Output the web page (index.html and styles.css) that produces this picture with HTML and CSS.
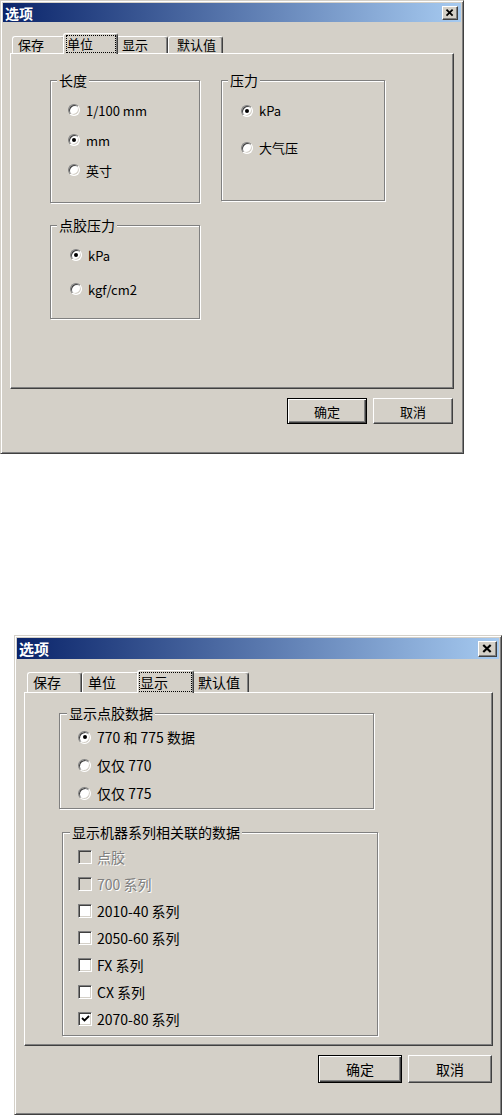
FILE: index.html
```html
<!DOCTYPE html>
<html lang="zh-CN">
<head>
<meta charset="UTF-8">
<title>选项</title>
<link rel="stylesheet" href="styles.css">
</head>
<body>

<!-- Units tab -->
<div class="dialog dialog-units">
  <div class="titlebar">
    <span class="title">选项</span>
    <span class="close-btn">
      <svg viewBox="0 0 16 14" preserveAspectRatio="none"><path d="M4 3L11 10M11 3L4 10" stroke="#000" stroke-width="2" fill="none"/></svg>
    </span>
  </div>
  <div class="dialog-body">
    <div class="tabs">
      <span class="tab tab-save">保存</span>
      <span class="tab tab-unit selected"><span class="focus">单位</span></span>
      <span class="tab tab-show">显示</span>
      <span class="tab tab-default">默认值</span>
    </div>
    <div class="panel">
      <div class="group-column">
        <fieldset class="group group-length">
          <legend>长度</legend>
          <label class="option"><span class="radio"></span>1/100 mm</label>
          <label class="option"><span class="radio checked"></span>mm</label>
          <label class="option"><span class="radio"></span>英寸</label>
        </fieldset>
        <fieldset class="group group-glue">
          <legend>点胶压力</legend>
          <label class="option"><span class="radio checked"></span>kPa</label>
          <label class="option"><span class="radio"></span>kgf/cm2</label>
        </fieldset>
      </div>
      <fieldset class="group group-pressure">
        <legend>压力</legend>
        <label class="option"><span class="radio checked"></span>kPa</label>
        <label class="option"><span class="radio"></span>大气压</label>
      </fieldset>
    </div>
    <div class="buttons">
      <button class="btn default">确定</button>
      <button class="btn">取消</button>
    </div>
  </div>
</div>

<!-- Display tab -->
<div class="dialog dialog-display">
  <div class="titlebar">
    <span class="title">选项</span>
    <span class="close-btn">
      <svg viewBox="0 0 16 14" preserveAspectRatio="none"><path d="M4 3L11 10M11 3L4 10" stroke="#000" stroke-width="2" fill="none"/></svg>
    </span>
  </div>
  <div class="dialog-body">
    <div class="tabs">
      <span class="tab tab-save">保存</span>
      <span class="tab tab-unit">单位</span>
      <span class="tab tab-show selected"><span class="focus">显示</span></span>
      <span class="tab tab-default">默认值</span>
    </div>
    <div class="panel">
      <fieldset class="group group-data">
        <legend>显示点胶数据</legend>
        <label class="option"><span class="radio checked"></span>770 和 775 数据</label>
        <label class="option"><span class="radio"></span>仅仅 770</label>
        <label class="option"><span class="radio"></span>仅仅 775</label>
      </fieldset>
      <fieldset class="group group-series">
        <legend>显示机器系列相关联的数据</legend>
        <label class="option disabled"><span class="checkbox"></span>点胶</label>
        <label class="option disabled"><span class="checkbox"></span>700 系列</label>
        <label class="option"><span class="checkbox"></span>2010-40 系列</label>
        <label class="option"><span class="checkbox"></span>2050-60 系列</label>
        <label class="option"><span class="checkbox"></span>FX 系列</label>
        <label class="option"><span class="checkbox"></span>CX 系列</label>
        <label class="option"><span class="checkbox"><svg viewBox="0 0 9 9"><path d="M1 4L3.5 6.5L8 2" stroke="#000" stroke-width="1.8" fill="none"/></svg></span>2070-80 系列</label>
      </fieldset>
    </div>
    <div class="buttons">
      <button class="btn default">确定</button>
      <button class="btn">取消</button>
    </div>
  </div>
</div>

</body>
</html>
```

FILE: styles.css
```css
body {
    margin: 0;
    background-color: #fff;
    font-family: "Noto Sans CJK SC", "DejaVu Sans", sans-serif;
    color: #000;
}

/* window frame */
.dialog {
    box-sizing: border-box;
    display: flex;
    flex-direction: column;
    padding: 2px;
    background-color: #d4d0c8;
    border: 1px solid;
    border-color: #d4d0c8 #404040 #404040 #d4d0c8;
    box-shadow: inset 1px 1px #fff, inset -1px -1px #808080;
}

.dialog-units {
    width: 464px;
    height: 454px;
    font-size: 13px;
}

.dialog-display {
    width: 488px;
    height: 480px;
    margin: 181px 0 0 14px;
    font-size: 14px;
}

.titlebar {
    display: flex;
    align-items: center;
    justify-content: space-between;
    padding: 0 3px 0 2px;
    background: linear-gradient(to right, #0a246a, #a6caf0);
    color: #fff;
    font-weight: bold;
}

.dialog-units .titlebar {
    height: 19px;
    font-size: 14px;
}

.dialog-display .titlebar {
    height: 21px;
    padding-right: 2px;
    font-size: 15px;
}

.close-btn {
    box-sizing: border-box;
    display: flex;
    background-color: #d4d0c8;
    border: 1px solid;
    border-color: #fff #404040 #404040 #fff;
    box-shadow: inset -1px -1px #808080;
}

.dialog-units .close-btn {
    width: 16px;
    height: 14px;
}

.dialog-display .close-btn {
    width: 19px;
    height: 16px;
}

.close-btn svg {
    width: 100%;
    height: 100%;
}

.dialog-body {
    padding: 11px 0 0 7px;
}

/* tabs */
.tabs {
    display: flex;
    align-items: flex-end;
}

.tab {
    box-sizing: border-box;
    padding-left: 5px;
    border: 1px solid;
    border-bottom: none;
    border-color: #fff #404040 #fff #fff;
    border-radius: 3px 3px 0 0;
    box-shadow: inset -1px 0 #808080;
    white-space: nowrap;
}

.tab.selected {
    position: relative;
    z-index: 1;
    display: flex;
    margin: 0 -2px -1px;
    padding: 1px 1px 1px 1px;
    background-color: #d4d0c8;
}

.focus {
    flex: 1;
    padding-left: 1px;
    outline: 1px dotted #000;
    outline-offset: -1px;
}

.dialog-units .tabs { height: 20px; padding-left: 2px; }
.dialog-units .tab { height: 17px; line-height: 15px; }
.dialog-units .tab.selected { height: 21px; line-height: 17px; padding-left: 2px; }
.dialog-units .tab-save { width: 53px; }
.dialog-units .tab-unit { width: 51px; }
.dialog-units .tab-show { width: 52px; }
.dialog-units .tab-default { width: 55px; padding-left: 8px; }
.dialog-units .tab.selected.tab-unit { width: 55px; }

.dialog-display .tabs { height: 22px; padding-left: 3px; }
.dialog-display .tab { height: 20px; line-height: 18px; }
.dialog-display .tab.selected { height: 23px; line-height: 20px; }
.dialog-display .tab-save { width: 55px; }
.dialog-display .tab-unit { width: 57px; }
.dialog-display .tab-show { width: 53px; }
.dialog-display .tab-default { width: 57px; }
.dialog-display .tab.selected.tab-show { width: 57px; }

.panel {
    box-sizing: border-box;
    border: 1px solid;
    border-color: #fff #404040 #404040 #fff;
    box-shadow: inset -1px -1px #808080;
}

.dialog-units .panel {
    display: flex;
    align-items: flex-start;
    gap: 21px;
    width: 444px;
    height: 336px;
    padding: 18px 0 0 39px;
}

.dialog-display .panel {
    width: 469px;
    height: 354px;
    padding: 12px 0 0 34px;
}

/* group boxes */
.group {
    box-sizing: border-box;
    margin: 0;
    padding: 0;
    min-width: 0;
    border: 1px solid #808080;
    box-shadow: inset 1px 1px #fff, 1px 1px #fff;
}

.group legend {
    margin-left: 6px;
    padding: 0 2px;
    line-height: 16px;
    font-size: 14px;
    background-color: #d4d0c8;
}

.group-column {
    display: flex;
    flex-direction: column;
    gap: 14px;
}

.group-length { width: 150px; height: 131px; padding-top: 7px; }
.group-length .option { height: 30px; padding-left: 17px; }

.group-glue { width: 150px; height: 102px; padding-top: 5px; }
.group-glue .option { height: 34px; padding-left: 19px; }

.group-pressure { width: 164px; height: 129px; padding-top: 4px; }
.group-pressure .option { height: 37px; padding-left: 19px; }

.group-data { width: 315px; height: 104px; padding-top: 2px; }
.group-data legend { margin-left: 7px; }
.group-data .option { height: 28px; padding-left: 18px; }

.group-series { width: 316px; height: 212px; margin: 15px 0 0 3px; padding-top: 3px; }
.group-series legend { margin-left: 7px; }
.group-series .option { height: 27px; padding-left: 15px; }

/* radio and check boxes */
.option {
    display: flex;
    align-items: center;
    gap: 6px;
    white-space: nowrap;
}

.option.disabled {
    color: #808080;
    text-shadow: 1px 1px #fff;
}

.radio {
    box-sizing: border-box;
    position: relative;
    flex: none;
    width: 12px;
    height: 12px;
    border: 1px solid;
    border-color: #808080 #fff #fff #808080;
    border-radius: 50%;
    background-color: #fff;
    box-shadow: inset 1px 1px #404040, inset -1px -1px #d4d0c8;
}

.dialog-display .radio {
    width: 13px;
    height: 13px;
}

.radio.checked::after {
    content: "";
    position: absolute;
    top: 50%;
    left: 50%;
    width: 4px;
    height: 4px;
    margin: -2px 0 0 -2px;
    border-radius: 50%;
    background-color: #000;
}

.checkbox {
    box-sizing: border-box;
    display: flex;
    align-items: center;
    justify-content: center;
    flex: none;
    width: 14px;
    height: 14px;
    margin-right: -1px;
    border: 1px solid;
    border-color: #808080 #fff #fff #808080;
    background-color: #fff;
    box-shadow: inset 1px 1px #404040, inset -1px -1px #d4d0c8;
}

.disabled .checkbox {
    background-color: #d4d0c8;
}

.checkbox svg {
    width: 9px;
    height: 9px;
}

/* buttons */
.buttons {
    display: flex;
    justify-content: flex-end;
    gap: 6px;
    margin-top: 9px;
}

.dialog-units .buttons { width: 443px; }
.dialog-display .buttons { width: 468px; }

.btn {
    box-sizing: border-box;
    padding: 0;
    font-family: inherit;
    font-size: inherit;
    color: #000;
    background-color: #d4d0c8;
    border: 1px solid;
    border-color: #fff #404040 #404040 #fff;
    box-shadow: inset -1px -1px #808080;
}

.btn.default {
    border-color: #000;
    box-shadow: inset 1px 1px #fff, inset -1px -1px #404040, inset -2px -2px #808080;
}

.dialog-units .btn { width: 80px; height: 26px; }
.dialog-display .btn { width: 84px; height: 28px; }
```
